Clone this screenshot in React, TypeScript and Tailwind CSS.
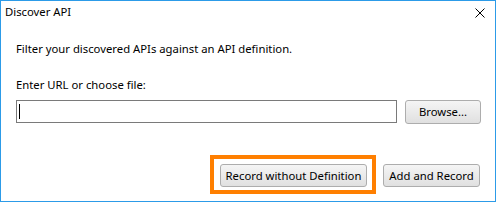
export default function App() {
  const font = { fontFamily: '"Noto Sans", "Segoe UI", sans-serif' };
  return (
    <div
      className="w-[496px] h-[202px] border border-[#2c9be8] bg-white flex flex-col text-[11.3px] leading-[16px] text-black"
      style={font}
    >
      <div className="flex justify-between items-start pt-[3px] pl-[4px] pr-[10px] h-[19px]">
        <span>Discover API</span>
        <svg width="10" height="10" viewBox="0 0 10 10" className="mt-[4px]">
          <path d="M0.5 0.5 L9.5 9.5 M9.5 0.5 L0.5 9.5" stroke="#000" strokeWidth="1" fill="none" />
        </svg>
      </div>
      <div className="pl-[15px] mt-[21px]">Filter your discovered APIs against an API definition.</div>
      <div className="pl-[15px] mt-[20px]">Enter URL or choose file:</div>
      <div className="flex items-start gap-[8px] pl-[15px] mt-[7px]">
        <div className="w-[381px] h-[23px] border border-[#7a7a7a] bg-white relative">
          <div className="absolute left-[2px] top-[3px] w-[1px] h-[15px] bg-black" />
        </div>
        <button className="w-[76px] h-[24px] border border-[#adadad] rounded-[3px] bg-gradient-to-b from-[#f5f5f5] to-[#e0e0e0] flex items-center justify-center">
          Browse...
        </button>
      </div>
      <div className="flex items-start pl-[209px] mt-[31px]">
        <div className="w-[166px] h-[39px] border-4 border-[#ff7f00] pl-[6px] pt-[5px]">
          <button className="w-[147px] h-[23px] border border-[#adadad] rounded-[3px] bg-gradient-to-b from-[#f5f5f5] to-[#e0e0e0] flex items-center justify-center">
            Record without Definition
          </button>
        </div>
        <button className="ml-[7px] mt-[9px] w-[97px] h-[23px] border border-[#adadad] rounded-[3px] bg-gradient-to-b from-[#f5f5f5] to-[#e0e0e0] flex items-center justify-center">
          Add and Record
        </button>
      </div>
    </div>
  );
}
